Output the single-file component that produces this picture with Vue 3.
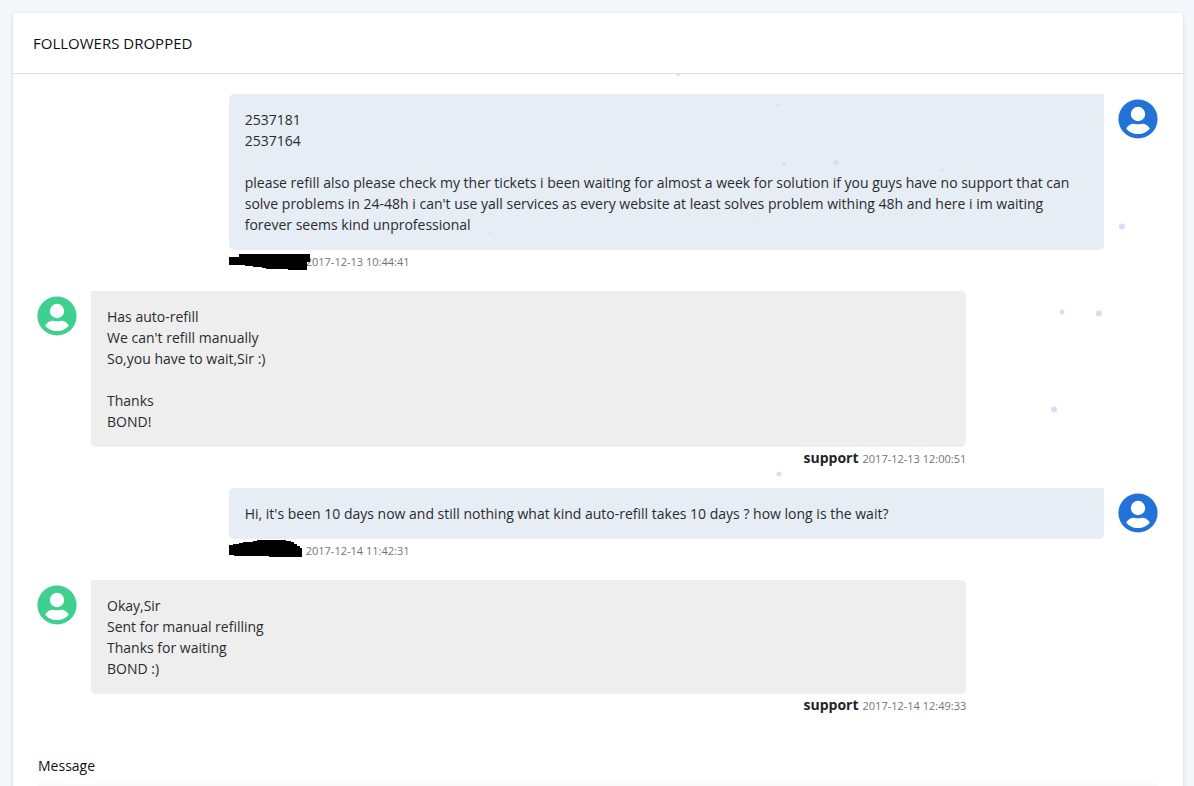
<script setup>
const messages = [
  {
    mine: true,
    text: "2537181\n2537164\n\nplease refill also please check my ther tickets i been waiting for almost a week for solution if you guys have no support that can solve problems in 24-48h i can't use yall services as every website at least solves problem withing 48h and here i im waiting forever seems kind unprofessional",
    time: '2017-12-13 10:44:41',
    mask: 'M0 6H10V3H81V11H78V19H59V18H37V17H33V16H24V15H16V14H0Z',
  },
  {
    mine: false,
    text: "Has auto-refill\nWe can't refill manually\nSo,you have to wait,Sir :)\n\nThanks\nBOND!",
    author: 'support',
    time: '2017-12-13 12:00:51',
  },
  {
    mine: true,
    text: "Hi, it's been 10 days now and still nothing what kind auto-refill takes 10 days ? how long is the wait?",
    time: '2017-12-14 11:42:31',
    mask: 'M0 5H4V4H10V3H14V2H24V1H28V0H57V1H62V2H65V4H68V6H71V8H73V17H40V16H5V15H0Z',
  },
  {
    mine: false,
    text: 'Okay,Sir\nSent for manual refilling\nThanks for waiting\nBOND :)',
    author: 'support',
    time: '2017-12-14 12:49:33',
  },
]

const particles = [
  [665, 0, 2],
  [765, 31, 1.5],
  [771, 89.5, 2],
  [823, 88.5, 2.8],
  [929.5, 96, 1.5],
  [745, 144.5, 1],
  [477, 159, 1],
  [1109, 152.5, 3],
  [1049, 238, 2.5],
  [1086, 239.5, 3],
  [1041, 335.5, 3],
  [766, 400, 2.5],
]
</script>

<template>
  <main class="page">
    <section class="card">
      <header class="card-head">
        <h1>Followers dropped</h1>
      </header>
      <div class="card-body">
        <article v-for="m in messages" :key="m.time" class="message" :class="{ mine: m.mine }">
          <svg class="avatar" viewBox="0 0 40 40" aria-hidden="true">
            <circle class="disc" cx="20" cy="20" r="19.6" />
            <circle cx="20" cy="15" r="7.2" fill="#fff" />
            <path
              d="M8.2 29.4C10 26.4 13 24.6 16 24.7C18.4 25.4 21.6 25.4 24 24.7C27 24.6 30 26.4 31.8 29.4C29.4 32.8 25 35 20 35C15 35 10.6 32.8 8.2 29.4Z"
              fill="#fff"
            />
          </svg>
          <div class="content">
            <p class="bubble">{{ m.text }}</p>
            <div class="meta">
              <strong v-if="m.author">{{ m.author }}</strong>
              <span v-else class="masked">
                <svg width="81" height="20" viewBox="0 0 81 20" aria-hidden="true">
                  <path :d="m.mask" />
                </svg>
              </span>
              <time>{{ m.time }}</time>
            </div>
          </div>
        </article>

        <form class="reply" @submit.prevent>
          <label for="reply-text">Message</label>
          <textarea id="reply-text" rows="5"></textarea>
        </form>

        <svg class="particles" aria-hidden="true">
          <circle v-for="(p, i) in particles" :key="i" :cx="p[0]" :cy="p[1]" :r="p[2]" />
        </svg>
      </div>
    </section>
  </main>
</template>

<style>
body {
  background: #f4f8fc;
}
</style>

<style scoped>
.page {
  padding: 13px 11px 0 13px;
  font-family: 'Open Sans', 'Noto Sans', sans-serif;
  font-size: 14px;
  line-height: 21px;
  color: #2b2b2e;
}
.card {
  background: #fff;
  border-radius: 3px;
  box-shadow: 0 1px 4px rgba(0, 0, 0, 0.14);
}
.card-head {
  padding: 20px;
  border-bottom: 1px solid #dddfe1;
}
h1 {
  margin: 0;
  font-size: 15px;
  line-height: 20px;
  font-weight: 500;
  text-transform: uppercase;
  color: #111;
}
.card-body {
  position: relative;
  padding: 20px 25px 20px 24px;
}
.message {
  display: flex;
  align-items: flex-start;
  gap: 14px;
  width: 82.9%;
}
.message.mine {
  flex-direction: row-reverse;
  margin-left: auto;
}
.avatar {
  flex: none;
  width: 40px;
  height: 40px;
  margin-top: 5px;
}
.disc {
  fill: #3fcf8e;
}
.mine .disc {
  fill: #2272d8;
}
.content {
  flex: 1;
  min-width: 0;
}
.bubble {
  margin: 0;
  padding: 15px 16px;
  background: #eee;
  border-radius: 0 5px 5px 5px;
  white-space: pre-line;
}
.mine .bubble {
  background: #e6edf5;
  border-radius: 5px 0 5px 5px;
}
.meta {
  display: flex;
  align-items: baseline;
  justify-content: flex-end;
  gap: 4px;
  height: 21px;
  padding-bottom: 20px;
}
.mine .meta {
  justify-content: flex-start;
  padding: 1px 0 19px;
}
.meta strong {
  font-weight: 700;
  color: #212529;
}
.meta time {
  font-size: 11px;
  color: #6c757d;
}
.masked {
  position: relative;
  width: 73px;
  height: 21px;
  align-self: flex-start;
}
.masked svg {
  position: absolute;
  left: 0;
  top: 0;
}
.reply {
  padding: 20px 0 0 1px;
}
.reply label {
  display: block;
  margin-bottom: 7px;
  font-weight: 500;
  color: #111;
}
.reply textarea {
  display: block;
  box-sizing: border-box;
  width: 100%;
  padding: 12px;
  border: 1px solid #fafafa;
  border-radius: 3px;
  background: #fafafa;
  font: inherit;
  resize: vertical;
}
.particles {
  position: absolute;
  inset: 0;
  width: 100%;
  height: 100%;
  fill: #d3dff2;
  pointer-events: none;
}
</style>
